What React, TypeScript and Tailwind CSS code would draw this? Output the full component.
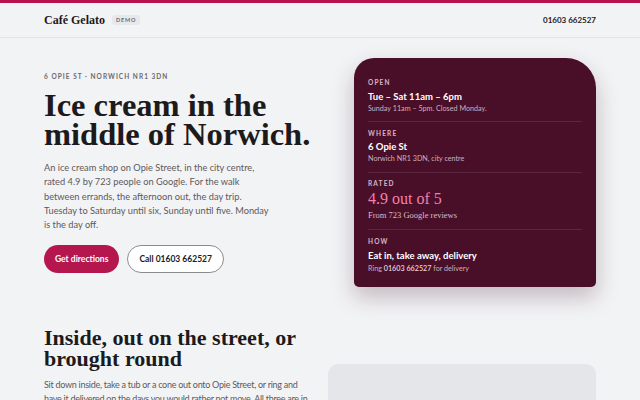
import React from "react";

const serif = "font-['Liberation_Serif',Georgia,serif]";
const sans = "font-['Lato','Open_Sans',sans-serif]";

function Label({ children }: { children: React.ReactNode }) {
  return (
    <div className="text-[6.5px] font-bold uppercase leading-[10px] tracking-[0.18em] text-[#d6b6c4]">
      {children}
    </div>
  );
}

export default function App() {
  return (
    <div className={`min-h-[400px] bg-[#f2f3f5] text-[#1d1a1b] ${sans}`}>
      {/* Header */}
      <header className="border-t-[3px] border-[#b8134d] border-b border-b-[#e2e3e6]">
        <div className="flex h-[34px] items-center justify-between px-11">
          <div className="flex items-center gap-[7px]">
            <span className={`${serif} text-[12px] font-bold`}>Café Gelato</span>
            <span className="rounded-[3px] bg-[#e7e8eb] px-[4px] py-[1px] text-[5.5px] font-bold tracking-[0.15em] text-[#6b6b70]">
              DEMO
            </span>
          </div>
          <span className="text-[8px] font-bold">01603 662527</span>
        </div>
      </header>

      {/* Hero */}
      <section className="flex gap-[30px] px-11 pt-[20px]">
        <div className="flex-1 pt-[14px]">
          <div className="text-[6.5px] font-bold uppercase leading-[10px] tracking-[0.16em] text-[#6c6a6c]">
            6 Opie St · Norwich NR1 3DN
          </div>
          <h1 className={`${serif} mt-[8.5px] whitespace-nowrap text-[32.5px] font-bold leading-[29px]`}>
            Ice cream in the
            <br />
            middle of Norwich.
          </h1>
          <p className="mt-[12.5px] max-w-[229px] text-[9.25px] leading-[14.3px] text-[#5d595b]">
            An ice cream shop on Opie Street, in the city centre, rated 4.9 by 723 people on
            Google. For the walk between errands, the afternoon out, the day trip. Tuesday to
            Saturday until six, Sunday until five. Monday is the day off.
          </p>
          <div className="mt-[12.5px] flex gap-[8px]">
            <button className="h-[28px] rounded-full bg-[#b5164e] px-[11px] text-[8.5px] font-bold text-white">
              Get directions
            </button>
            <button className="h-[28px] rounded-full border border-[#8d8b8e] bg-white px-[11px] text-[8.5px] font-bold text-[#1d1a1b]">
              Call 01603 662527
            </button>
          </div>
        </div>

        <aside className="w-[242px] shrink-0 rounded-tl-[20px] rounded-tr-[30px] rounded-b-[5px] bg-[#4a0f28] px-[14px] pt-[12px] pb-[13.5px] text-white shadow-[0_10px_22px_rgba(60,10,30,0.25)]">
          <div className="border-b border-white/10 pt-[8px] pb-[7px]">
            <Label>Open</Label>
            <div className="mt-[1.5px] text-[9.5px] font-bold leading-[13px]">Tue – Sat 11am – 6pm</div>
            <div className="text-[7.2px] leading-[11px] text-[#cbb0bc]">Sunday 11am – 5pm. Closed Monday.</div>
          </div>
          <div className="border-b border-white/10 pt-[7px] pb-[8px]">
            <Label>Where</Label>
            <div className="mt-[1.5px] text-[9.5px] font-bold leading-[13px]">6 Opie St</div>
            <div className="text-[7.2px] leading-[11px] text-[#cbb0bc]">Norwich NR1 3DN, city centre</div>
          </div>
          <div className="border-b border-white/10 pt-[6px] pb-[8px]">
            <Label>Rated</Label>
            <div className={`${serif} mt-[1px] text-[16px] leading-[18px] text-[#f27eab]`}>4.9 out of 5</div>
            <div className={`${serif} mt-[1px] text-[8.5px] leading-[12px] text-[#d8bdc9]`}>
              From 723 Google reviews
            </div>
          </div>
          <div className="pt-[7px]">
            <Label>How</Label>
            <div className="mt-[1.5px] text-[9.5px] font-bold leading-[13px]">Eat in, take away, delivery</div>
            <div className="mt-[1px] text-[7.2px] leading-[11px] text-[#cbb0bc]">
              Ring <span className="font-semibold text-[#e6d2db]">01603 662527</span> for delivery
            </div>
          </div>
        </aside>
      </section>

      {/* Second section */}
      <section className="flex px-11 pt-[39.5px]">
        <div className="w-[284px] shrink-0">
          <h2 className={`${serif} whitespace-nowrap text-[22px] font-bold leading-[21px]`}>
            Inside, out on the street, or
            <br />
            brought round
          </h2>
          <p className="mt-[9.5px] max-w-[264px] text-[9px] leading-[14.3px] tracking-[-0.03em] text-[#5d595b]">
            Sit down inside, take a tub or a cone out onto Opie Street, or ring and have it
            delivered on the days you would rather not move. All three are in
          </p>
        </div>
        <div className="mt-[37.5px] h-[60px] flex-1 rounded-[10px] bg-[#e5e6e9]" />
      </section>
    </div>
  );
}
